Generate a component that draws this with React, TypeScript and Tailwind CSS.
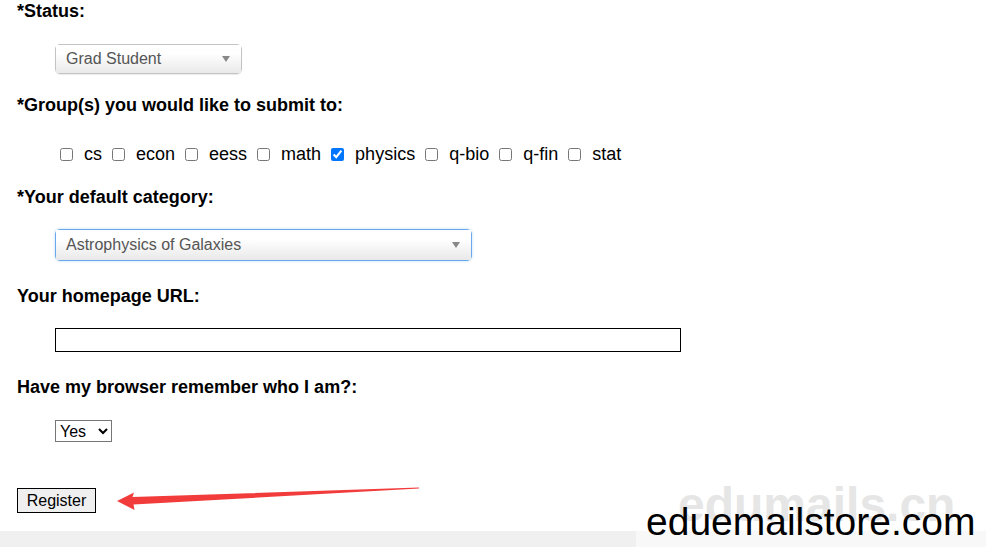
import { useState } from "react"

const groups = [
  { value: "cs", label: "cs" },
  { value: "econ", label: "econ" },
  { value: "eess", label: "eess" },
  { value: "math", label: "math" },
  { value: "physics", label: "physics" },
  { value: "q-bio", label: "q-bio" },
  { value: "q-fin", label: "q-fin" },
  { value: "stat", label: "stat" },
]

const FieldLabel = ({ children, className = "" }: { children: React.ReactNode; className?: string }) => (
  <div className={`text-[18px] font-bold leading-[21px] text-black ${className}`}>{children}</div>
)

const FancySelect = ({
  value,
  options,
  className,
}: {
  value: string
  options: string[]
  className: string
}) => (
  <div className={`relative ${className}`}>
    <select
      defaultValue={value}
      className="h-full w-full cursor-pointer appearance-none bg-linear-to-b from-white from-30% to-[#e9e9e9] pl-[10px] text-[16px] text-[#555] outline-none"
    >
      {options.map((o) => (
        <option key={o}>{o}</option>
      ))}
    </select>
    <span className="pointer-events-none absolute top-1/2 right-[11px] -translate-y-1/2 border-x-[4px] border-t-[6px] border-x-transparent border-t-[#888]" />
  </div>
)

const App = () => {
  const [checked, setChecked] = useState<string[]>(["physics"])

  const toggle = (v: string) =>
    setChecked((c) => (c.includes(v) ? c.filter((x) => x !== v) : [...c, v]))

  return (
    <div
      className="relative flex h-[547px] w-full flex-col overflow-hidden bg-white"
      style={{ fontFamily: '"Liberation Sans", Arial, sans-serif' }}
    >
      <div className="flex flex-col items-start pl-[17px] pt-[1px]">
        <FieldLabel>*Status:</FieldLabel>
        <FancySelect
          value="Grad Student"
          options={["Grad Student", "Undergrad", "Faculty", "Staff"]}
          className="mt-[22px] ml-[38px] h-[30px] w-[187px] rounded-[5px] border border-[#c4c4c4] shadow-[0_1px_1px_rgba(0,0,0,0.08)]"
        />

        <FieldLabel className="mt-[21px]">*Group(s) you would like to submit to:</FieldLabel>
        <div className="mt-[28px] ml-[43px] flex h-[21px] items-center text-[18px] leading-[21px] text-black">
          {groups.map(({ value, label }, idx) => (
            <label key={value} className={`flex items-center ${idx > 0 ? "ml-[10px]" : ""}`}>
              <input
                type="checkbox"
                checked={checked.includes(value)}
                onChange={() => toggle(value)}
                className="h-[13px] w-[13px] accent-[#0075ff]"
              />
              <span className="ml-[11px]">{label}</span>
            </label>
          ))}
        </div>

        <FieldLabel className="mt-[22px]">*Your default category:</FieldLabel>
        <FancySelect
          value="Astrophysics of Galaxies"
          options={["Astrophysics of Galaxies", "Cosmology and Nongalactic Astrophysics", "High Energy Physics - Theory"]}
          className="mt-[21px] ml-[38px] h-[32px] w-[417px] rounded-[5px] border border-[#6aa7ec] shadow-[0_0_3px_rgba(102,175,233,0.45)]"
        />

        <FieldLabel className="mt-[25px]">Your homepage URL:</FieldLabel>
        <input
          type="text"
          className="mt-[21px] ml-[38px] h-[24px] w-[626px] border border-black px-1 text-[16px] outline-none"
        />

        <FieldLabel className="mt-[25px]">Have my browser remember who I am?:</FieldLabel>
        <select
          defaultValue="Yes"
          className="mt-[22px] ml-[38px] h-[22px] w-[57px] border border-[#767676] text-[16px] text-black"
        >
          <option>Yes</option>
          <option>No</option>
        </select>

        <button className="mt-[46px] h-[25px] w-[79px] border border-black bg-[#efefef] text-[16px] leading-none text-black">
          Register
        </button>
      </div>

      <div className="mt-auto h-[16px] w-full bg-[#f0f0f0]" />

      {/* annotation arrow */}
      <svg className="absolute top-[484px] left-[112px]" width="310" height="30" viewBox="112 484 310 30">
        <polygon
          points="117,501 134,492.5 132.5,497 419,487.5 419,488.5 133.5,504.5 134.5,510"
          fill="#f23c3c"
        />
      </svg>

      {/* watermark */}
      <div className="absolute right-0 bottom-0 h-[70px] w-[350px] bg-white/50">
        <div className="absolute top-[0px] left-[42px] text-[48px] leading-[56px] font-bold text-[#e6e6e6]">edumails.cn</div>
        <div className="absolute top-[22px] left-[10px] text-[39px] leading-[45px] text-black">eduemailstore.com</div>
      </div>
    </div>
  )
}

export default App
